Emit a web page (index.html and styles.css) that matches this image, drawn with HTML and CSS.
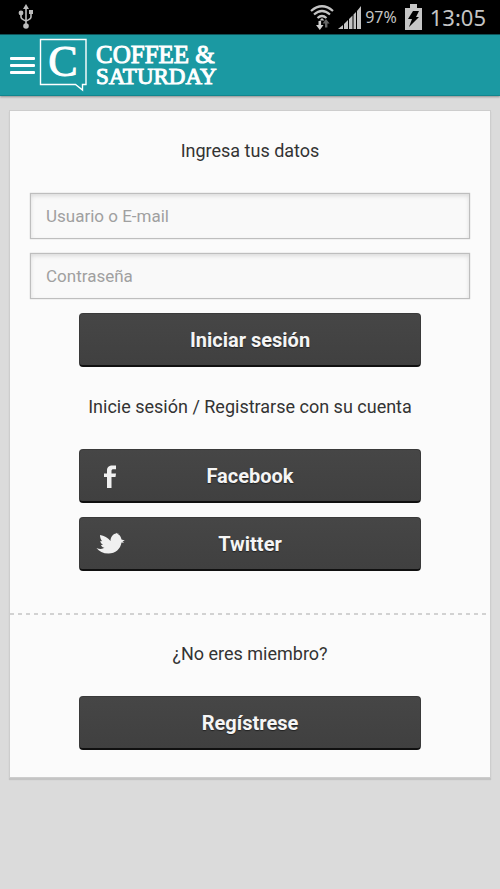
FILE: index.html
```html
<!DOCTYPE html>
<html lang="es">
<head>
<meta charset="utf-8">
<meta name="viewport" content="width=device-width, initial-scale=1">
<title>Coffee &amp; Saturday</title>
<link rel="stylesheet" href="styles.css">
</head>
<body>
<div class="status">
  <svg class="usb" width="16" height="26" viewBox="0 0 16 26" fill="none" stroke="#bdbdbd" stroke-width="1.600" aria-hidden="true">
    <path d="M8 3v18M3 9v4q0 2 5 4M13 8v5q0 2-5 4"/>
    <path d="M8 0l3 5H5z" fill="#bdbdbd" stroke="none"/>
    <circle cx="8" cy="22" r="2.800" fill="#bdbdbd" stroke="none"/>
    <circle cx="3" cy="9" r="2.400" fill="#bdbdbd" stroke="none"/>
    <path d="M11 6h4v4h-4z" fill="#bdbdbd" stroke="none"/>
  </svg>
  <svg class="wifi" width="24" height="26" viewBox="0 0 24 26" fill="none" stroke="#c4c4c4" stroke-width="2.200" aria-hidden="true">
    <path d="M1 7Q12-2.500 23 7M4 10.500Q12 3.500 20 10.500M7.500 14Q12 10 16.500 14"/>
    <path d="M12 14l2.500 2.500h-5z" fill="#c4c4c4" stroke="none"/>
    <path d="M8.500 17h2.600v4h2.400L9.800 26 6 21h2.500z" fill="#d0d0d0" stroke="none"/>
    <path d="M15 23.500v-4h-2.400L16 15l3.600 4.500h-2.200v4z" fill="#666" stroke="none"/>
  </svg>
  <svg class="signal" width="23" height="23" viewBox="0 0 23 23" fill="#c4c4c4" aria-hidden="true">
    <path d="M0 23l5-4v4zM6 23v-5l4-4v9zM11 23V13l3.500-3.500V23zM15.500 23V8.500L18 6v17zM19 23V5l4-5v23z"/>
  </svg>
  <span class="percent">97%</span>
  <svg class="battery" width="17" height="26" viewBox="0 0 17 26" aria-hidden="true">
    <path d="M0 4h5V0h7v4h5v22H0z" fill="#c6c6c6"/>
    <path d="M8 7h6l-3 6h3L4 23l3-8H3z" fill="#000"/>
  </svg>
  <time class="clock">13:05</time>
</div>

<header class="header">
  <button class="menu" type="button" aria-label="Menú"><span></span><span></span><span></span></button>
  <a class="brand" href="#">
    <svg width="48" height="54" viewBox="0 0 48 54" aria-hidden="true">
      <path d="M1.500 1.500H47V46.500H43.500v5.500l-7-5.500h-35z" fill="none" stroke="#fff" stroke-width="1.400"/>
      <text class="mark" x="24" y="38" text-anchor="middle">C</text>
    </svg>
    <span class="name"><span class="line-one">COFFEE &amp;</span><span class="line-two">SATURDAY</span></span>
  </a>
</header>

<main class="card">
  <form class="section login">
    <h1 class="caption">Ingresa tus datos</h1>
    <input class="field" type="text" placeholder="Usuario o E-mail" aria-label="Usuario o E-mail">
    <input class="field" type="password" placeholder="Contraseña" aria-label="Contraseña">
    <button class="button" type="submit">Iniciar sesión</button>
    <h2 class="caption">Inicie sesión / Registrarse con su cuenta</h2>
    <button class="button" type="button">
      <svg class="icon" width="30" height="26" viewBox="0 0 30 26" fill="#f0f0f0" aria-hidden="true"><path d="M11 25V14H8v-3.500h3V7.500C11 4 13 2.500 16.500 2.500H20v3.700h-2.400C16 6.200 15.500 6.800 15.500 8v2.500H20l-.5 3.500h-4v11z"/></svg>
      Facebook
    </button>
    <button class="button" type="button">
      <svg class="icon" width="30" height="26" viewBox="0 0 30 26" fill="#f0f0f0" aria-hidden="true"><path d="M4 4C8 4.500 12 6.500 14.500 10C14.500 6 17 3 20 2.500l.8-.8.200 1 1.500-.5-.5 1C24 4 25 6 25.500 8.500l3.300 1-2.300.9 1.700 1.300-2.700-.2C24.500 18 19.500 22.500 12.500 22.500C7 22.500 3 20.500.5 17c3 1.200 6 1.200 8-.2C6.500 16.500 5.300 15.500 5 14l2-.2C5.500 13 4.500 11.700 4.300 10l1.900.3C4.800 8.500 4 6.500 4 4z"/></svg>
      Twitter
    </button>
  </form>
  <section class="section join">
    <h2 class="caption">¿No eres miembro?</h2>
    <button class="button" type="button">Regístrese</button>
  </section>
</main>
</body>
</html>
```
FILE: styles.css
```css
* {
  box-sizing: border-box;
}

body {
  margin: 0;
  min-height: 100vh;
  background: #dbdbdb;
  color: #333;
  font-family: Roboto, "Liberation Sans", sans-serif;
}

.status {
  display: flex;
  align-items: center;
  height: 34px;
  padding: 0 14px 0 18px;
  background: #000;
  color: #c4c4c4;
}

.wifi {
  margin-left: auto;
}

.signal {
  margin-left: 4px;
}

.percent {
  margin: 0 8px 0 4px;
  font-family: "Noto Sans", sans-serif;
  font-size: 16px;
}

.clock {
  margin-left: 8px;
  font-family: "Noto Sans", sans-serif;
  font-size: 22px;
}

.header {
  display: flex;
  align-items: center;
  gap: 4px;
  height: 62px;
  padding: 0 10px;
  background: #1b99a2;
  border-top: 1px solid #10545a;
  border-bottom: 1px solid #12868e;
  box-shadow: 0 1px 2px #00000059;
}

.menu {
  display: flex;
  flex-direction: column;
  gap: 4px;
  width: 25px;
  padding: 0;
  border: 0;
  background: none;
}

.menu span {
  height: 3px;
  border-radius: 1px;
  background: #fff;
}

.brand {
  display: flex;
  align-items: center;
  gap: 9px;
  color: #fff;
  text-decoration: none;
  font-family: "Liberation Serif", serif;
}

.mark {
  fill: #fff;
  stroke: #fff;
  stroke-width: 1px;
  font-size: 44px;
}

.name {
  display: flex;
  flex-direction: column;
  padding-top: 2px;
  -webkit-text-stroke: 1px #fff;
}

.line-one {
  font-size: 25px;
  line-height: 22px;
}

.line-two {
  font-size: 23px;
  line-height: 22px;
}

.card {
  margin: 14px 9px;
  background: #fbfbfb;
  border: 1px solid #cdcdcd;
  box-shadow: 0 2px 1px #c4c4c4;
}

.section {
  display: flex;
  flex-direction: column;
  align-items: center;
  gap: 14px;
}

.login {
  padding: 14px 20px 42px;
}

.join {
  padding: 15px 20px 27px;
  background: repeating-linear-gradient(90deg, #d2d2d2 0 4px, #fbfbfb 4px 8px) top / 100% 2px no-repeat;
}

.caption {
  margin: 12px 0 14px;
  font-size: 18px;
  font-weight: 400;
  line-height: 28px;
}

.field {
  width: 100%;
  height: 46px;
  padding: 0 15px;
  border: 1px solid #bebebe;
  border-radius: 0;
  background: #f9f9f9;
  box-shadow: 0 0 1px #bebebe, inset 0 2px 4px #0000001f;
  color: #333;
  font: 17px Roboto, "Liberation Sans", sans-serif;
}

.field::placeholder {
  color: #a0a0a0;
}

.button {
  position: relative;
  width: calc(78% - 2px);
  height: 54px;
  padding: 0;
  border: 1px solid #3a3a3a;
  border-bottom: 2px solid #101010;
  border-radius: 4px;
  background: linear-gradient(#464646, #404040);
  color: #f5f5f5;
  font: bold 20px Roboto, "Liberation Sans", sans-serif;
  text-shadow: 0 1px 1px #222;
}

.icon {
  position: absolute;
  top: 13px;
  left: 16px;
}
```
